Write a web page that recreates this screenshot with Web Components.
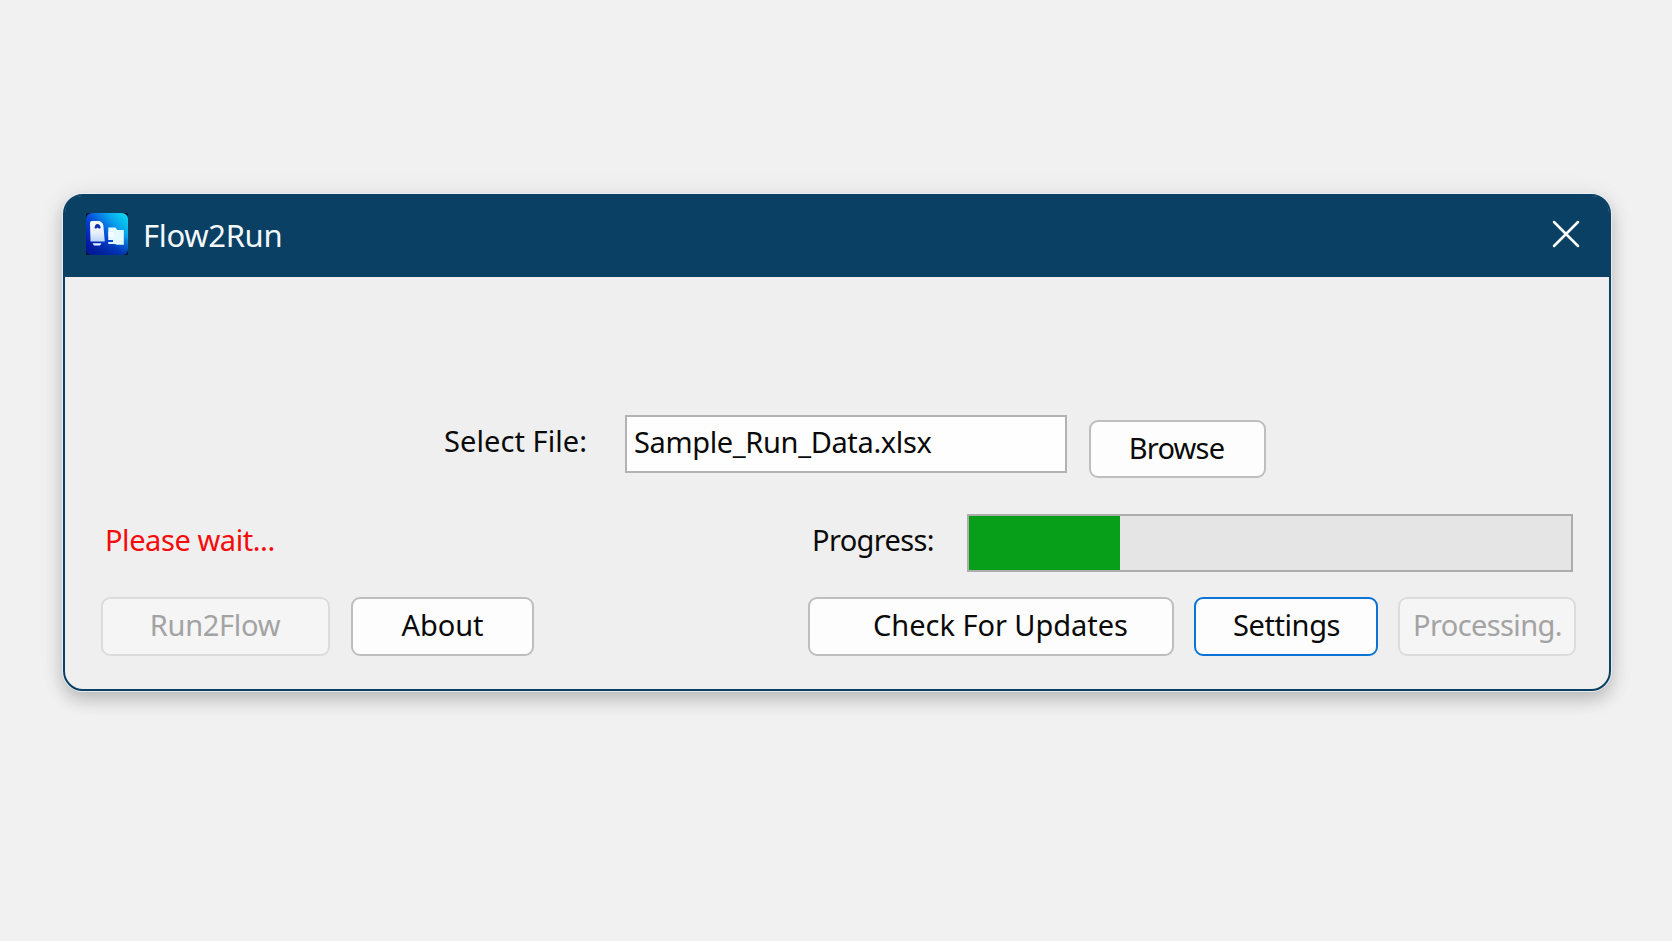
<!DOCTYPE html>
<html lang="en">
<head>
<meta charset="utf-8">
<title>Flow2Run</title>
<style>
  * {
    box-sizing: border-box;
  }
  body {
    margin: 0;
    height: 941px;
    overflow: hidden;
    padding: 194px 0 0 63px;
    background-color: #f1f1f1;
    font-family: "Noto Sans", "Open Sans", sans-serif;
    font-size: 29px;
    color: #0a0a0a;
  }
</style>
</head>
<body>
<app-window caption="Flow2Run">
  <form-row style="--gap-top: 138px">
    <text-label style="--start: 379px; --width: 181px; --baseline: -5px; letter-spacing: 0.07px">Select File:</text-label>
    <file-field value="Sample_Run_Data.xlsx"></file-field>
    <push-button style="--start: 22px; --top: 5px; --width: 177px; --height: 58px; --lift: 2px; --outdent: 2px; letter-spacing: -0.8px">Browse</push-button>
  </form-row>
  <form-row style="--gap-top: 41px">
    <text-label style="--start: 40px; --width: 707px; --baseline: -5px; --color: #f40b0b; letter-spacing: -0.43px">Please wait...</text-label>
    <text-label style="--width: 155px; --baseline: -5px; letter-spacing: -0.63px">Progress:</text-label>
    <progress-meter value="25"></progress-meter>
  </form-row>
  <form-row style="--gap-top: 25px">
    <push-button disabled style="--start: 36px; --width: 229px; --outdent: 1px; letter-spacing: -0.28px">Run2Flow</push-button>
    <push-button style="--start: 21px; --width: 183px; letter-spacing: -0.05px">About</push-button>
    <push-button style="--start: 274px; --width: 366px; --indent: 19px; letter-spacing: -0.04px">Check For Updates</push-button>
    <push-button focused style="--start: 20px; --width: 184px; --indent: 1px; letter-spacing: -0.4px">Settings</push-button>
    <push-button disabled style="--start: 20px; --width: 178px; --indent: 1px; letter-spacing: -0.6px">Processing.</push-button>
  </form-row>
</app-window>

<script>
class AppIcon extends HTMLElement {
  constructor() {
    super();
    this.attachShadow({ mode: 'open' }).innerHTML = `
      <style>
        :host { display: block; width: 42px; height: 42px; }
        svg { display: block; }
      </style>
      <svg width="42" height="42" viewBox="0 0 42 42">
        <defs>
          <linearGradient id="tile" x1="0.1" y1="0.85" x2="0.95" y2="0.1">
            <stop offset="0" stop-color="#0215a8"/>
            <stop offset="0.4" stop-color="#0647d8"/>
            <stop offset="0.75" stop-color="#08a3ec"/>
            <stop offset="1" stop-color="#0bd0ee"/>
          </linearGradient>
          <linearGradient id="shade" x1="0" y1="0" x2="0" y2="1">
            <stop offset="0.55" stop-color="#00218c" stop-opacity="0"/>
            <stop offset="1" stop-color="#00218c" stop-opacity="0.6"/>
          </linearGradient>
          <linearGradient id="doc" x1="0" y1="0" x2="0" y2="1">
            <stop offset="0" stop-color="#fff"/>
            <stop offset="0.6" stop-color="#e6eefc"/>
            <stop offset="1" stop-color="#b9d4f7"/>
          </linearGradient>
        </defs>
        <rect width="42" height="42" rx="1" fill="#03132e"/>
        <rect width="42" height="42" rx="6" fill="url(#tile)"/>
        <rect width="42" height="42" rx="6" fill="url(#shade)"/>
        <path d="M4 10Q4 8 6 8H13.500Q17.500 9.500 17.500 14L18.800 28.500H4.500Z" fill="url(#doc)"/>
        <path d="M8.500 15Q9 11 11.500 11Q14.200 11 14.700 15L13 15.800L11.500 14.600L10 15.800Z" fill="#0b2fae"/>
        <path d="M6.500 30.200H15.500L14 32.500H8Z" fill="#e4f3ff"/>
        <path d="M22.300 14.500H29.500L31.500 17H37.800V31.800H31L29 31H22.300V29H27V27H22.300Z" fill="#e4f9ff"/>
        <path d="M22.300 19H28V24H22.300Z" fill="#fff" opacity="0.6"/>
      </svg>`;
  }
}
customElements.define('app-icon', AppIcon);

class AppWindow extends HTMLElement {
  constructor() {
    super();
    this.attachShadow({ mode: 'open' });
  }
  connectedCallback() {
    this.shadowRoot.innerHTML = `
      <style>
        :host {
          display: flex;
          flex-direction: column;
          box-sizing: border-box;
          width: 1548px;
          height: 497px;
          border: 2px solid #094064;
          border-radius: 20px;
          background-color: #efefef;
          box-shadow: 0 0 0 1px rgba(235, 238, 240, 0.9), 0 8px 18px rgba(0, 0, 0, 0.22), 0 2px 30px rgba(0, 0, 0, 0.06);
        }
        header {
          display: flex;
          align-items: center;
          box-sizing: border-box;
          height: 81px;
          padding: 0 29px 5px 21px;
          border-radius: 17px 17px 0 0;
          background-color: #094064;
          color: #f4f8fb;
          flex: none;
        }
        h1 {
          flex: 1;
          margin: 1px 0 0 15px;
          font-size: 31px;
          font-weight: 400;
          line-height: 42px;
          letter-spacing: -0.33px;
        }
        svg { display: block; margin-bottom: 1px; }
      </style>
      <header>
        <app-icon></app-icon>
        <h1>${this.getAttribute('caption')}</h1>
        <svg width="28" height="28" viewBox="0 0 28 28" fill="none" stroke="#fff" stroke-width="2.500" stroke-linecap="round">
          <path d="M2 2L26 26M26 2L2 26"/>
        </svg>
      </header>
      <slot></slot>`;
  }
}
customElements.define('app-window', AppWindow);

class FormRow extends HTMLElement {
  constructor() {
    super();
    this.attachShadow({ mode: 'open' }).innerHTML = `
      <style>
        :host {
          display: flex;
          align-items: flex-start;
          height: 58px;
          flex: none;
          margin-top: var(--gap-top, 0);
        }
      </style>
      <slot></slot>`;
  }
}
customElements.define('form-row', FormRow);

class TextLabel extends HTMLElement {
  constructor() {
    super();
    this.attachShadow({ mode: 'open' }).innerHTML = `
      <style>
        :host {
          display: block;
          flex: none;
          width: var(--width);
          margin-left: var(--start, 0);
          margin-top: var(--baseline, 0);
          line-height: 62px;
          white-space: nowrap;
          color: var(--color, inherit);
        }
      </style>
      <slot></slot>`;
  }
}
customElements.define('text-label', TextLabel);

class FileField extends HTMLElement {
  constructor() {
    super();
    this.attachShadow({ mode: 'open' });
  }
  connectedCallback() {
    this.shadowRoot.innerHTML = `
      <style>
        :host {
          display: block;
          box-sizing: border-box;
          flex: none;
          width: 442px;
          height: 58px;
          padding-left: 7px;
          border: 2px solid #b3b3b3;
          background-color: #fefefe;
          line-height: 50px;
          letter-spacing: -0.36px;
        }
      </style>
      <span>${this.getAttribute('value')}</span>`;
  }
}
customElements.define('file-field', FileField);

class ProgressMeter extends HTMLElement {
  constructor() {
    super();
    this.attachShadow({ mode: 'open' });
  }
  connectedCallback() {
    this.shadowRoot.innerHTML = `
      <style>
        :host {
          display: block;
          box-sizing: border-box;
          flex: none;
          width: 606px;
          height: 58px;
          border: 2px solid #adadad;
          background-color: #e5e5e5;
        }
        div {
          width: ${this.getAttribute('value')}%;
          height: 100%;
          background-color: #079e19;
        }
      </style>
      <div></div>`;
  }
}
customElements.define('progress-meter', ProgressMeter);

class PushButton extends HTMLElement {
  constructor() {
    super();
    this.attachShadow({ mode: 'open' }).innerHTML = `
      <style>
        :host {
          display: flex;
          align-items: center;
          justify-content: center;
          box-sizing: border-box;
          flex: none;
          width: var(--width);
          height: var(--height, 59px);
          margin-left: var(--start, 0);
          margin-top: var(--top, 0);
          padding: 0 var(--outdent, 0) var(--lift, 3px) var(--indent, 0);
          border: 2px solid #bebebe;
          border-radius: 9px;
          background-color: #fdfdfd;
          line-height: 40px;
          white-space: nowrap;
        }
        :host([disabled]) {
          border-color: #dcdcdc;
          background-color: #f5f5f5;
          color: #a3a3a3;
        }
        :host([focused]) {
          border-color: #0a74d6;
        }
      </style>
      <slot></slot>`;
  }
}
customElements.define('push-button', PushButton);
</script>
</body>
</html>
